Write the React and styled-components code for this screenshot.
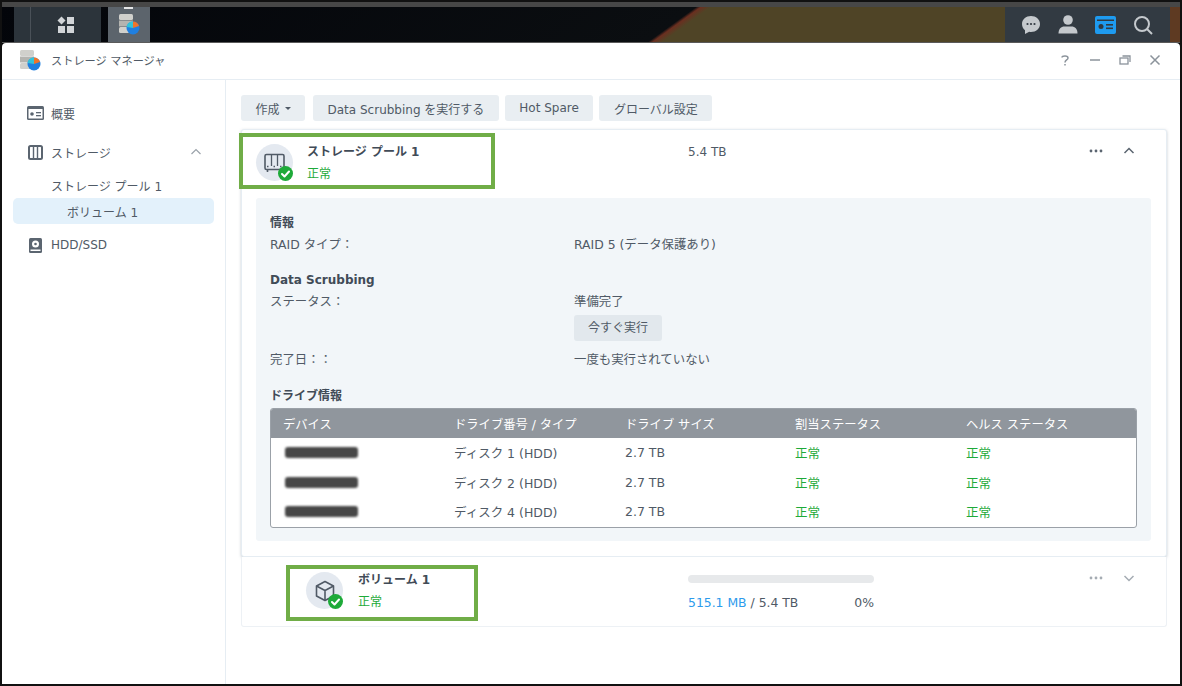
import styled, { createGlobalStyle } from 'styled-components';

const GlobalStyle = createGlobalStyle`
  html, body {
    margin: 0;
    padding: 0;
    background: #000;
  }
  body {
    font-family: "DejaVu Sans", "Noto Sans CJK JP", sans-serif;
    color: #4a5360;
  }
  * {
    box-sizing: border-box;
  }
`;

const Stage = styled.div`
  position: relative;
  width: 1182px;
  height: 686px;
`;

const Screen = styled.div`
  width: 1182px;
  height: 686px;
  overflow: hidden;
  display: flex;
  flex-direction: column;
  background: #000;
  border: 2px solid #111;
`;

const Taskbar = styled.div`
  height: 41px;
  flex: none;
  display: flex;
  justify-content: space-between;
  border-top: 5px solid #474747;
  border-bottom: 1px solid #5a5a5a;
  background: linear-gradient(
    144deg,
    #03050a 0,
    #0b0e11 56.6%,
    #6a2f20 57%,
    #4f4426 57.8%,
    #4f4426 88%,
    #5e3a22 94%
  );
`;

const TaskLeft = styled.div`
  display: flex;
  align-items: stretch;
  padding-left: 12px;
`;

const TaskCell = styled.div`
  width: ${(p) => p.$w}px;
  margin-left: ${(p) => p.$ml || 0}px;
  position: relative;
  display: flex;
  align-items: center;
  justify-content: center;
  background: ${(p) => (p.$active ? '#5c646c' : '#2c343b')};
  border-left: ${(p) => (p.$line ? '1px solid #4a5158' : '0')};
`;

const ActiveMark = styled.span`
  position: absolute;
  top: 0;
  left: 16px;
  width: 9px;
  height: 2px;
  background: #e4e6e8;
`;

const TaskRight = styled.div`
  display: flex;
  align-items: center;
  justify-content: space-between;
  width: 165px;
  margin-right: 10px;
  padding: 0 17px 0 16px;
  background: #323a42;
`;

const Window = styled.div`
  flex: 1;
  display: flex;
  flex-direction: column;
  background: #fff;
  border-radius: 4px 4px 0 0;
  min-height: 0;
`;

const TitleBar = styled.div`
  height: 37px;
  flex: none;
  display: flex;
  align-items: center;
  padding: 0 19px 2px 17px;
  border-bottom: 1px solid #e6edf3;
`;

const TitleText = styled.div`
  margin-left: 10px;
  font-size: 11.2px;
  color: #505a66;
  flex: 1;
`;

const WinButtons = styled.div`
  display: flex;
  align-items: center;
  gap: 18px;
`;

const WinBody = styled.div`
  flex: 1;
  display: flex;
  min-height: 0;
`;

const Sidebar = styled.div`
  width: 224px;
  flex: none;
  border-right: 1px solid #e6edf3;
  padding: 20px 11px 0;
`;

const NavItem = styled.div`
  height: 26px;
  display: flex;
  align-items: center;
  padding-left: 14px;
  gap: 7px;
  font-size: 12px;
  color: #505a66;
  margin-bottom: ${(p) => p.$mb || 0}px;
`;

const NavIcon = styled.span`
  width: 17px;
  display: flex;
  justify-content: center;
`;

const NavChevron = styled.span`
  margin-left: auto;
  margin-right: 12px;
  display: flex;
`;

const SubItem = styled.div`
  height: 26px;
  display: flex;
  align-items: center;
  padding-left: ${(p) => (p.$deep ? 54 : 38)}px;
  margin-bottom: ${(p) => p.$mb || 0}px;
  font-size: 12px;
  color: #505a66;
  border-radius: 5px;
  background: ${(p) => (p.$selected ? '#e3f1fb' : 'transparent')};
`;

const Main = styled.div`
  flex: 1;
  padding: 15px 14px 0 15px;
  min-width: 0;
`;

const Toolbar = styled.div`
  display: flex;
  gap: 6px;
  margin-bottom: 8px;
`;

const ToolButton = styled.div`
  height: 26px;
  padding: 0 14.5px;
  margin-right: ${(p) => p.$mr || 0}px;
  display: flex;
  align-items: center;
  gap: 5px;
  border-radius: 3px;
  background: #e9eef2;
  font-size: 12px;
  color: #505a66;
  white-space: nowrap;
`;

const Caret = styled.span`
  width: 0;
  height: 0;
  border-left: 3px solid transparent;
  border-right: 3px solid transparent;
  border-top: 3px solid #505a66;
`;

const PoolCard = styled.div`
  width: 926px;
  height: 428px;
  border: 1px solid #e6edf3;
  border-radius: 3px;
  box-shadow: 0 1px 3px rgba(90, 110, 130, 0.35);
  background: #fff;
`;

const CardHead = styled.div`
  display: flex;
  height: ${(p) => p.$h}px;
  padding-left: ${(p) => p.$left}px;
`;

const HeadIcon = styled.div`
  position: relative;
  width: 37px;
  height: 37px;
  margin-top: ${(p) => p.$top}px;
  flex: none;
  border-radius: 50%;
  background: #e4e9f0;
  display: flex;
  align-items: center;
  justify-content: center;
`;

const OkBadge = styled.span`
  position: absolute;
  right: 0;
  bottom: 0;
  width: 15px;
  height: 15px;
  border-radius: 50%;
  background: #1eaa39;
  display: flex;
  align-items: center;
  justify-content: center;
`;

const HeadText = styled.div`
  width: ${(p) => p.$w}px;
  padding-left: ${(p) => p.$pad}px;
  flex: none;
  padding-top: ${(p) => p.$top}px;
`;

const HeadName = styled.div`
  font-size: 12px;
  font-weight: 700;
  color: #414b57;
  line-height: 16px;
`;

const OkText = styled.div`
  font-size: 12px;
  color: #1eaa39;
  line-height: 16px;
  margin-top: 6px;
`;

const Capacity = styled.div`
  flex: 1;
  font-size: 12px;
  color: #505a66;
  padding-top: 15px;
`;

const HeadActions = styled.div`
  display: flex;
  align-items: flex-start;
  gap: 20px;
  padding: 15px 31px 0 0;
`;

const DetailPanel = styled.div`
  margin: 0 15px 0 14px;
  height: 343px;
  background: #f2f6f9;
  border-radius: 3px;
  padding: 17px 14px 0 14px;
`;

const SectionTitle = styled.div`
  font-size: 12px;
  font-weight: 700;
  line-height: 16px;
  color: #414b57;
  margin: ${(p) => p.$mt || 0}px 0 4px;
`;

const InfoRow = styled.div`
  display: grid;
  grid-template-columns: 304px 1fr;
  font-size: 12.4px;
  line-height: 20px;
  color: #505a66;
`;

const RunButton = styled.div`
  width: 88px;
  height: 26px;
  margin: 3px 0 9px;
  border-radius: 3px;
  background: #e2e8ed;
  display: flex;
  align-items: center;
  justify-content: center;
  font-size: 12px;
`;

const DriveTable = styled.div`
  border: 1px solid #9ba1a8;
  border-radius: 3px;
  background: #fff;
  overflow: hidden;
  margin-top: 1px;
`;

const DriveRow = styled.div`
  display: grid;
  grid-template-columns: 171px 171px 170px 171px 1fr;
  align-items: center;
  height: ${(p) => p.$h}px;
  padding-left: 12px;
  font-size: ${(p) => (p.$head ? 12.3 : 12.5)}px;
  color: ${(p) => (p.$head ? '#fff' : '#505a66')};
  background: ${(p) => (p.$head ? '#90969d' : 'transparent')};
`;

const Redacted = styled.span`
  display: block;
  width: 73px;
  height: 11px;
  margin-left: 2px;
  border-radius: 3px;
  background: #474747;
  filter: blur(1px);
`;

const Good = styled.span`
  color: #1eaa39;
`;

const VolumeCard = styled.div`
  width: 926px;
  height: 70px;
  border: 1px solid #edf1f5;
  border-top: 0;
  border-radius: 0 0 3px 3px;
  background: #fff;
`;

const VolumeUsage = styled.div`
  flex: 1;
  padding-top: 18px;
  font-size: 12.4px;
  color: #505a66;
`;

const Track = styled.div`
  width: 186px;
  height: 8px;
  border-radius: 4px;
  background: #e7e9eb;
  margin-bottom: 12px;
`;

const UsageLine = styled.div`
  width: 186px;
  display: flex;
  justify-content: space-between;
  line-height: 16px;
`;

const Used = styled.span`
  color: #2d9bec;
`;

const Highlight = styled.div`
  position: absolute;
  left: ${(p) => p.$x}px;
  top: ${(p) => p.$y}px;
  width: ${(p) => p.$w}px;
  height: ${(p) => p.$h}px;
  border: 4px solid #70ad47;
  pointer-events: none;
`;

const DbIcon = () => (
  <svg width="22" height="21" viewBox="0 0 22 21">
    <rect x="1" y="0" width="14" height="6" rx="1.500" fill="#d0d0cc" />
    <rect x="1" y="6.500" width="14" height="6" fill="#b4b4b0" />
    <rect x="1" y="13" width="14" height="6" rx="1.500" fill="#d0d0cc" />
    <circle cx="15" cy="14" r="6.500" fill="#1f7fe0" />
    <path d="M15 14V7.500A6.500 6.500 0 0 1 21 12Z" fill="#f0742a" />
    <path d="M15 14L8.600 13A6.500 6.500 0 0 1 15 7.500Z" fill="#33c3d8" />
  </svg>
);

const GridIcon = () => (
  <svg width="18" height="18" viewBox="0 0 18 18" fill="#d2d5d8">
    <path d="M4.500 0.500L8.500 4.500L4.500 8.500L0.500 4.500Z" />
    <rect x="10" y="1" width="7" height="7" />
    <rect x="1" y="10" width="7" height="7" />
    <rect x="10" y="10" width="7" height="7" />
  </svg>
);

const ChatIcon = () => (
  <svg width="20" height="20" viewBox="0 0 20 20">
    <path d="M10 1c5 0 9 3.400 9 8s-4 8-9 8c-.6 0-1.200 0-1.800-.2L4 19v-3.800C2 13.800 1 11.600 1 9c0-4.600 4-8 9-8z" fill="#c5c9cd" />
    <circle cx="6.500" cy="9" r="1.100" fill="#323a42" />
    <circle cx="10" cy="9" r="1.100" fill="#323a42" />
    <circle cx="13.500" cy="9" r="1.100" fill="#323a42" />
  </svg>
);

const UserIcon = () => (
  <svg width="20" height="19" viewBox="0 0 20 19" fill="#c5c9cd">
    <circle cx="10" cy="5" r="4.800" />
    <path d="M0.500 18.500c0-4.500 2.500-7 6-7h7c3.500 0 6 2.500 6 7z" />
  </svg>
);

const WidgetIcon = () => (
  <svg width="21" height="18" viewBox="0 0 21 18">
    <rect width="21" height="18" rx="2" fill="#1e9bf0" />
    <rect x="2" y="3.500" width="17" height="1.500" fill="#323a42" />
    <circle cx="6" cy="10.500" r="2.500" fill="#323a42" />
    <rect x="11" y="8" width="7" height="1.600" fill="#323a42" />
    <rect x="11" y="11.500" width="7" height="1.600" fill="#323a42" />
  </svg>
);

const SearchIcon = () => (
  <svg width="20" height="20" viewBox="0 0 20 20" fill="none" stroke="#c5c9cd" strokeWidth="2">
    <circle cx="9" cy="9" r="7" />
    <path d="M14 14l5 5" />
  </svg>
);

const OverviewIcon = () => (
  <svg width="17" height="14" viewBox="0 0 17 14">
    <rect width="17" height="14" rx="1.500" fill="#5b6570" />
    <rect x="1.500" y="3" width="14" height="9.500" fill="#fff" />
    <circle cx="5" cy="8" r="1.800" fill="#5b6570" />
    <rect x="9" y="6" width="5" height="1.300" fill="#5b6570" />
    <rect x="9" y="9" width="5" height="1.300" fill="#5b6570" />
  </svg>
);

const StorageIcon = () => (
  <svg width="15" height="15" viewBox="0 0 15 15" fill="none" stroke="#5b6570" strokeWidth="2">
    <rect x="1" y="1" width="13" height="13" rx="1.500" />
    <path d="M5.500 1v13M9.500 1v13" strokeWidth="1.400" />
  </svg>
);

const DiskIcon = () => (
  <svg width="13" height="15" viewBox="0 0 13 15">
    <rect width="13" height="15" rx="1.500" fill="#5b6570" />
    <circle cx="6.500" cy="6" r="3.500" fill="#fff" />
    <circle cx="6.500" cy="6" r="1.300" fill="#5b6570" />
    <rect x="1.500" y="11.500" width="10" height="1.500" fill="#fff" />
  </svg>
);

const PoolIcon = () => (
  <svg width="21" height="20" viewBox="0 0 21 20" fill="none" stroke="#505a66">
    <rect x="1" y="1.500" width="19" height="15" rx="1.500" strokeWidth="1.600" />
    <path d="M7.500 2v11M13.500 2v11" strokeWidth="1.300" />
    <path d="M3 13.500h1.500M9.500 13.500h1.500M16 13.500h1.500" strokeWidth="1.300" />
    <path d="M3.500 17v2M17.500 17v2" strokeWidth="1.600" />
  </svg>
);

const BoxIcon = () => (
  <svg width="20" height="22" viewBox="0 0 20 22" fill="none" stroke="#505a66" strokeWidth="1.600" strokeLinejoin="round">
    <path d="M10 1.500L18.500 6v10L10 20.500 1.500 16V6z" />
    <path d="M1.500 6L10 10.500 18.500 6M10 10.500v10" />
  </svg>
);

const Check = () => (
  <svg width="9" height="8" viewBox="0 0 9 8" fill="none" stroke="#fff" strokeWidth="2" strokeLinecap="round" strokeLinejoin="round">
    <path d="M1 4l2.500 2.500L8 1.500" />
  </svg>
);

const Dots = ({ color }) => (
  <svg width="14" height="12" viewBox="0 0 14 12" fill={color}>
    <circle cx="2" cy="6" r="1.400" />
    <circle cx="7" cy="6" r="1.400" />
    <circle cx="12" cy="6" r="1.400" />
  </svg>
);

const Chevron = ({ up, color, width = 1.500 }) => (
  <svg width="12" height="12" viewBox="0 0 12 12" fill="none" stroke={color} strokeWidth={width}>
    <path d={up ? 'M1.500 8L6 3.500 10.500 8' : 'M1.500 4L6 8.500 10.500 4'} />
  </svg>
);

const drives = ['ディスク 1 (HDD)', 'ディスク 2 (HDD)', 'ディスク 4 (HDD)'];

const App = () => {
  return (
    <Stage>
      <GlobalStyle />
      <Screen>
        <Taskbar>
          <TaskLeft>
            <TaskCell $w={16} />
            <TaskCell $w={71} $line>
              <GridIcon />
            </TaskCell>
            <TaskCell $w={42} $ml={7} $active>
              <ActiveMark />
              <DbIcon />
            </TaskCell>
          </TaskLeft>
          <TaskRight>
            <ChatIcon />
            <UserIcon />
            <WidgetIcon />
            <SearchIcon />
          </TaskRight>
        </Taskbar>
        <Window>
          <TitleBar>
            <DbIcon />
            <TitleText>ストレージ マネージャ</TitleText>
            <WinButtons>
              <svg width="12" height="12" viewBox="0 0 12 12" fill="none" stroke="#8b939b" strokeWidth="1.500">
                <path d="M3 3.500C3 1.500 9 1 9 4c0 2-3 2-3 4.500M6 10v1.500" />
              </svg>
              <svg width="12" height="12" viewBox="0 0 12 12" stroke="#8b939b" strokeWidth="1.500">
                <path d="M1 6h10" />
              </svg>
              <svg width="12" height="12" viewBox="0 0 12 12" fill="none" stroke="#8b939b" strokeWidth="1.300">
                <rect x="1" y="4" width="8" height="6" />
                <path d="M3.500 2h7.500v6" />
              </svg>
              <svg width="12" height="12" viewBox="0 0 12 12" stroke="#8b939b" strokeWidth="1.500">
                <path d="M1.500 1.500l9 9M10.500 1.500l-9 9" />
              </svg>
            </WinButtons>
          </TitleBar>
          <WinBody>
            <Sidebar>
              <NavItem $mb={13}>
                <NavIcon>
                  <OverviewIcon />
                </NavIcon>
                概要
              </NavItem>
              <NavItem $mb={7}>
                <NavIcon>
                  <StorageIcon />
                </NavIcon>
                ストレージ
                <NavChevron>
                  <Chevron up color="#9aa2aa" width={1.200} />
                </NavChevron>
              </NavItem>
              <SubItem>ストレージ プール 1</SubItem>
              <SubItem $deep $selected $mb={8}>
                ボリューム 1
              </SubItem>
              <NavItem>
                <NavIcon>
                  <DiskIcon />
                </NavIcon>
                HDD/SSD
              </NavItem>
            </Sidebar>
            <Main>
              <Toolbar>
                <ToolButton $mr={2}>
                  作成 <Caret />
                </ToolButton>
                <ToolButton>Data Scrubbing を実行する</ToolButton>
                <ToolButton>Hot Spare</ToolButton>
                <ToolButton>グローバル設定</ToolButton>
              </Toolbar>
              <PoolCard>
                <CardHead $h={68} $left={14}>
                  <HeadIcon $top={14}>
                    <PoolIcon />
                    <OkBadge>
                      <Check />
                    </OkBadge>
                  </HeadIcon>
                  <HeadText $w={395} $pad={14} $top={14}>
                    <HeadName>ストレージ プール 1</HeadName>
                    <OkText>正常</OkText>
                  </HeadText>
                  <Capacity>5.4 TB</Capacity>
                  <HeadActions>
                    <Dots color="#5b6570" />
                    <Chevron up color="#5b6570" />
                  </HeadActions>
                </CardHead>
                <DetailPanel>
                  <SectionTitle>情報</SectionTitle>
                  <InfoRow>
                    <span>RAID タイプ：</span>
                    <span>RAID 5 (データ保護あり)</span>
                  </InfoRow>
                  <SectionTitle $mt={17}>Data Scrubbing</SectionTitle>
                  <InfoRow>
                    <span>ステータス：</span>
                    <span>
                      準備完了
                      <RunButton>今すぐ実行</RunButton>
                    </span>
                  </InfoRow>
                  <InfoRow>
                    <span>完了日：：</span>
                    <span>一度も実行されていない</span>
                  </InfoRow>
                  <SectionTitle $mt={18}>ドライブ情報</SectionTitle>
                  <DriveTable>
                    <DriveRow $head $h={29}>
                      <span>デバイス</span>
                      <span>ドライブ番号 / タイプ</span>
                      <span>ドライブ サイズ</span>
                      <span>割当ステータス</span>
                      <span>ヘルス ステータス</span>
                    </DriveRow>
                    {drives.map((drive) => (
                      <DriveRow key={drive} $h={29.500}>
                        <Redacted />
                        <span>{drive}</span>
                        <span>2.7 TB</span>
                        <Good>正常</Good>
                        <Good>正常</Good>
                      </DriveRow>
                    ))}
                  </DriveTable>
                </DetailPanel>
              </PoolCard>
              <VolumeCard>
                <CardHead $h={69} $left={64}>
                  <HeadIcon $top={15}>
                    <BoxIcon />
                    <OkBadge>
                      <Check />
                    </OkBadge>
                  </HeadIcon>
                  <HeadText $w={345} $pad={15} $top={15}>
                    <HeadName>ボリューム 1</HeadName>
                    <OkText>正常</OkText>
                  </HeadText>
                  <VolumeUsage>
                    <Track />
                    <UsageLine>
                      <span>
                        <Used>515.1 MB</Used> / 5.4 TB
                      </span>
                      <span>0%</span>
                    </UsageLine>
                  </VolumeUsage>
                  <HeadActions>
                    <Dots color="#a5acb3" />
                    <Chevron color="#a5acb3" />
                  </HeadActions>
                </CardHead>
              </VolumeCard>
            </Main>
          </WinBody>
        </Window>
      </Screen>
      <Highlight $x={239} $y={133} $w={256} $h={56} />
      <Highlight $x={286} $y={565} $w={192} $h={56} />
    </Stage>
  );
};

export default App;
